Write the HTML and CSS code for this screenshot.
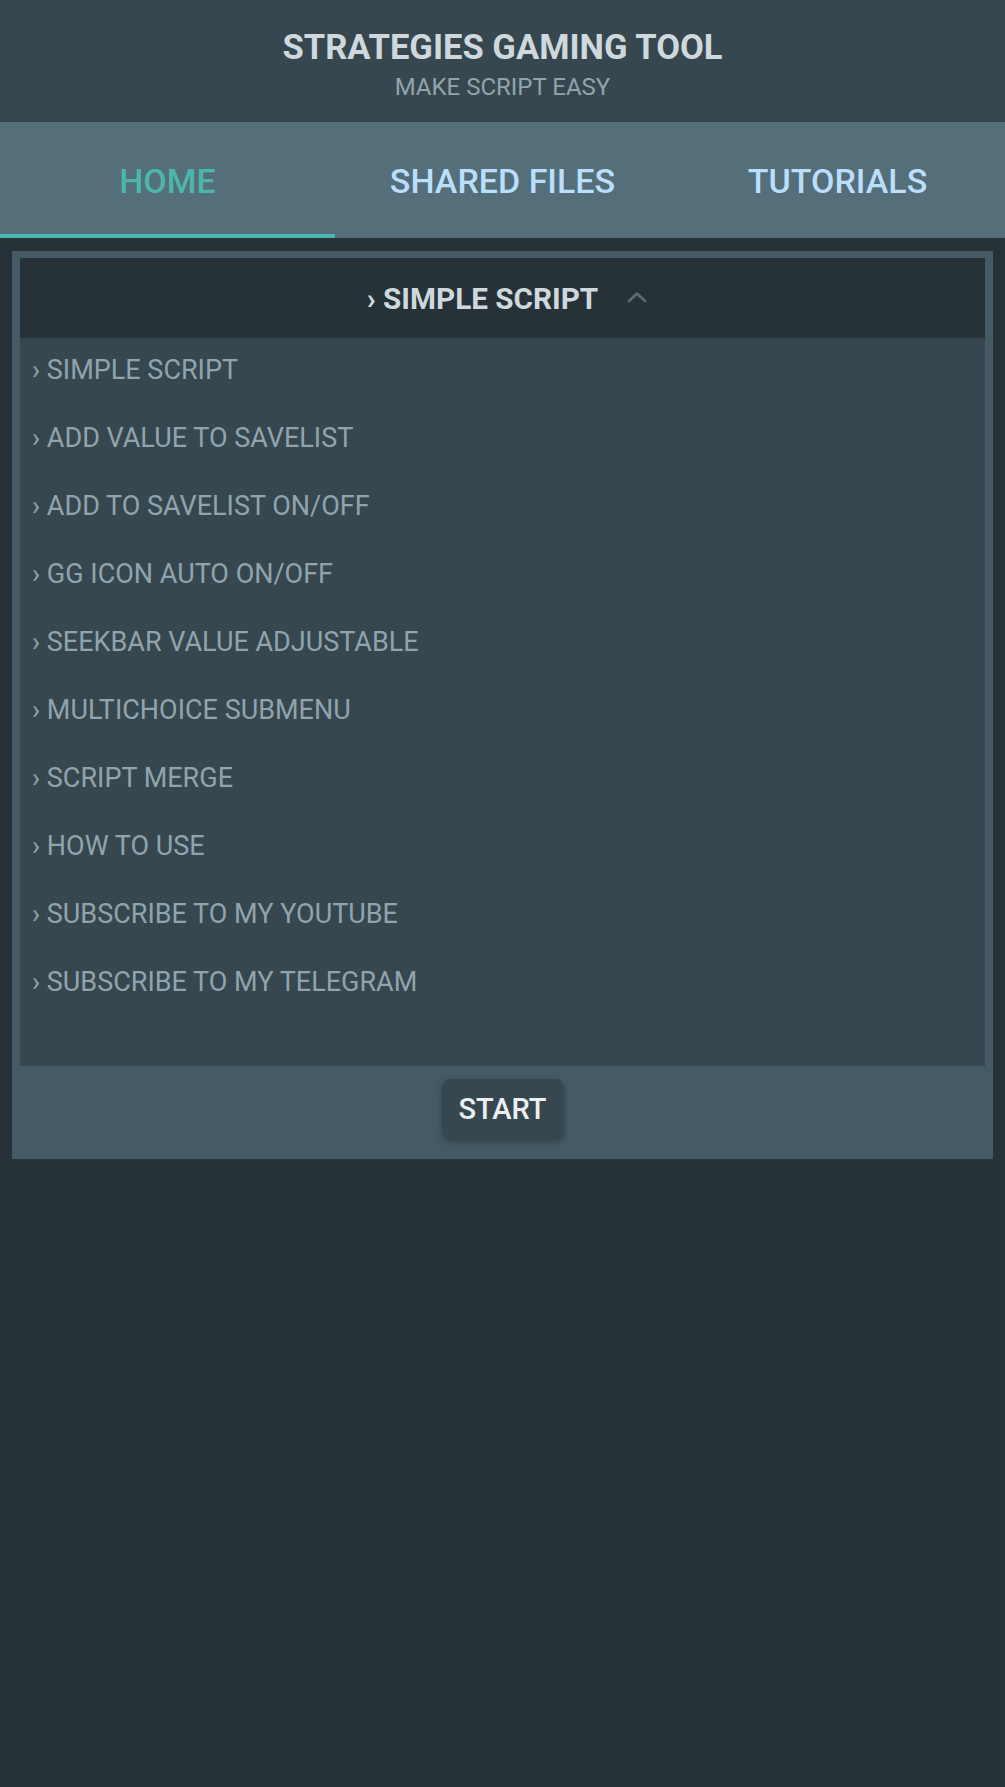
FILE: index.html
```html
<!DOCTYPE html>
<html lang="en">
<head>
<meta charset="utf-8">
<title>Strategies Gaming Tool</title>
<link rel="stylesheet" href="styles.css">
</head>
<body>
<header class="app-header">
  <h1 class="app-title">STRATEGIES GAMING TOOL</h1>
  <p class="app-subtitle">MAKE SCRIPT EASY</p>
</header>
<nav class="tabs">
  <a class="tab active">HOME</a>
  <a class="tab">SHARED FILES</a>
  <a class="tab">TUTORIALS</a>
</nav>
<main class="panel">
  <section class="dropdown">
    <div class="dropdown-head">
      <span class="dropdown-title">› SIMPLE SCRIPT</span>
      <svg class="caret" width="20" height="12" viewBox="0 0 20 12"><path d="M2 10 L10 2.5 L18 10" fill="none" stroke="#5c6b72" stroke-width="2.8" stroke-linecap="round" stroke-linejoin="round"/></svg>
    </div>
    <ul class="menu">
      <li class="menu-item">› SIMPLE SCRIPT</li>
      <li class="menu-item">› ADD VALUE TO SAVELIST</li>
      <li class="menu-item">› ADD TO SAVELIST ON/OFF</li>
      <li class="menu-item">› GG ICON AUTO ON/OFF</li>
      <li class="menu-item">› SEEKBAR VALUE ADJUSTABLE</li>
      <li class="menu-item">› MULTICHOICE SUBMENU</li>
      <li class="menu-item">› SCRIPT MERGE</li>
      <li class="menu-item">› HOW TO USE</li>
      <li class="menu-item">› SUBSCRIBE TO MY YOUTUBE</li>
      <li class="menu-item">› SUBSCRIBE TO MY TELEGRAM</li>
    </ul>
  </section>
  <div class="actions">
    <button class="start-btn">START</button>
  </div>
</main>
</body>
</html>
```
FILE: styles.css
```css
* { box-sizing: border-box; }
html, body {
  margin: 0;
  padding: 0;
  background: #263238;
  font-family: Roboto, "Noto Sans", "Liberation Sans", sans-serif;
  min-height: 100%;
}
body { min-height: 1787px; }

.app-header {
  background: #37474f;
  height: 122px;
  text-align: center;
  padding-top: 27px;
}
.app-title {
  margin: 0;
  font-size: 34.6px;
  font-weight: 700;
  line-height: 40px;
  color: #cfd8dc;
}
.app-subtitle {
  margin: 6px 0 0;
  font-size: 24px;
  font-weight: 400;
  line-height: 28px;
  color: #90a4ae;
}

.tabs {
  display: grid;
  grid-template-columns: 1fr 1fr 1fr;
  background: #546e7a;
  height: 116px;
}
.tab {
  display: flex;
  align-items: center;
  justify-content: center;
  font-size: 34px;
  font-weight: 500;
  color: #bbdefb;
  border-bottom: 4px solid transparent;
  padding-top: 6px;
}
.tab.active {
  color: #4db6ac;
  border-bottom-color: #4db6ac;
}

.panel {
  margin: 13px 12px 0;
  background: #455a64;
  padding: 7px 8px 0;
}
.dropdown { background: #37474f; }
.dropdown-head {
  background: #263238;
  height: 80px;
  display: flex;
  align-items: center;
  justify-content: center;
  gap: 29px;
  padding-left: 9px;
}
.dropdown-title {
  font-size: 29.7px;
  font-weight: 700;
  color: #cfd8dc;
}
.caret { margin-top: -2px; }

.menu {
  list-style: none;
  margin: 0;
  padding: 0 0 48px;
}
.menu-item {
  font-size: 27px;
  line-height: 34px;
  padding: 15px 12px 19px;
  color: #90a4ae;
}

.actions {
  height: 93px;
  display: flex;
  justify-content: center;
  padding-top: 13px;
}
.start-btn {
  width: 122px;
  height: 60px;
  border: none;
  border-radius: 8px;
  background: #37474f;
  color: #eceff1;
  font-family: Roboto, "Noto Sans", "Liberation Sans", sans-serif;
  font-size: 29px;
  font-weight: 500;
  box-shadow: 0 3px 6px rgba(0,0,0,0.25);
}
```
